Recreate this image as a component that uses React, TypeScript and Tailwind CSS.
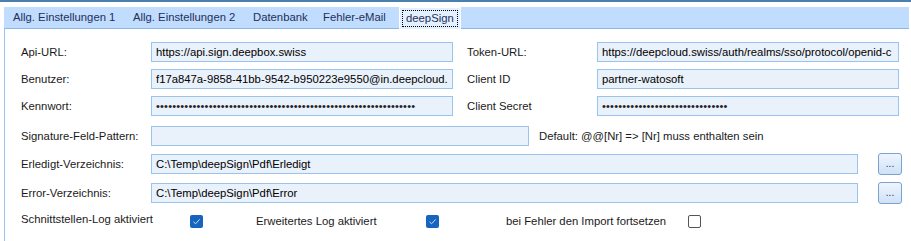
import React from "react";

const inputCls =
  "h-[20px] bg-[#e9f1fb] border border-[#99c4ef] px-[4px] flex items-center text-[11.3px] text-black overflow-hidden whitespace-nowrap";

function Field({ label, value, labelW, inputW, dots }: { label: string; value: string; labelW: number; inputW: number; dots?: boolean }) {
  return (
    <div className="flex items-center">
      <div style={{ width: labelW }} className="text-[11.3px] text-[#1a1a1a]">{label}</div>
      <div style={{ width: inputW }} className={inputCls}>
        <span className={dots ? "text-[11px] tracking-[0.2px] text-[#222]" : ""}>{value}</span>
      </div>
    </div>
  );
}

function Check({ checked }: { checked: boolean }) {
  return checked ? (
    <div className="w-[13px] h-[13px] rounded-[2px] bg-[#1565c0] flex items-center justify-center">
      <svg width="9" height="9" viewBox="0 0 9 9">
        <path d="M1.5 4.8 L3.6 6.8 L7.6 2.4" fill="none" stroke="#cfe0f5" strokeWidth="1" />
      </svg>
    </div>
  ) : (
    <div className="w-[13px] h-[13px] rounded-[2px] border border-[#555] bg-white" />
  );
}

function Btn() {
  return (
    <div className="w-[24px] h-[22px] rounded-[3px] border border-[#7aa3d0] bg-gradient-to-b from-[#eef5fd] to-[#cfe2f8] flex items-center justify-center text-[10px] text-[#303060] leading-none">
      ...
    </div>
  );
}

export default function App() {
  const tabs: [string, number][] = [
    ["Allg. Einstellungen 1", 120],
    ["Allg. Einstellungen 2", 120],
    ["Datenbank", 70],
    ["Fehler-eMail", 76],
  ];
  return (
    <div className="w-[911px] h-[241px] bg-white relative overflow-hidden" style={{ fontFamily: '"Liberation Sans", Arial, sans-serif' }}>
      <div className="h-[2px] bg-[#4a7fae]" />
      <div className="mt-[5px] ml-[4px] mr-[2px] h-[22px] bg-[#c0dcff] border-b border-[#8cb6e8] flex items-end pl-[9px]">
        {tabs.map(([t, w]) => (
          <div key={t} style={{ width: w }} className="h-[21px] flex items-center text-[11.3px] text-[#1f2f5a]">{t}</div>
        ))}
        <div className="relative h-[22px] -mb-[1px] px-[2px] bg-[#e2f0ff] border border-b-0 border-white flex items-center">
          <div className="border border-dotted border-black px-[3px] h-[17px] flex items-center text-[11.3px] text-[#1f2f5a]">deepSign</div>
        </div>
      </div>
      <div className="ml-[4px] border-l border-[#9cc2ee] h-[220px] pl-[16px] pt-[13px] flex flex-col">
        <div className="flex flex-col gap-[7px]">
          <div className="flex">
            <Field label="Api-URL:" value="https://api.sign.deepbox.swiss" labelW={130} inputW={302} />
            <div className="ml-[14px]"><Field label="Token-URL:" value="https://deepcloud.swiss/auth/realms/sso/protocol/openid-c" labelW={130} inputW={302} /></div>
          </div>
          <div className="flex">
            <Field label="Benutzer:" value="f17a847a-9858-41bb-9542-b950223e9550@in.deepcloud." labelW={130} inputW={302} />
            <div className="ml-[14px]"><Field label="Client ID" value="partner-watosoft" labelW={130} inputW={302} /></div>
          </div>
          <div className="flex">
            <Field label="Kennwort:" value={"•".repeat(64)} labelW={130} inputW={302} dots />
            <div className="ml-[14px]"><Field label="Client Secret" value={"•".repeat(31)} labelW={130} inputW={302} dots /></div>
          </div>
        </div>
        <div className="mt-[10px] flex flex-col gap-[7px]">
          <div className="flex items-center">
            <Field label="Signature-Feld-Pattern:" value="" labelW={130} inputW={378} />
            <div className="ml-[10px] text-[11.3px] text-[#1a1a1a]">Default: @@[Nr] =&gt; [Nr] muss enthalten sein</div>
          </div>
          <div className="flex items-center">
            <Field label="Erledigt-Verzeichnis:" value="C:\Temp\deepSign\Pdf\Erledigt" labelW={130} inputW={707} />
            <div className="ml-[20px]"><Btn /></div>
          </div>
          <div className="flex items-center">
            <Field label="Error-Verzeichnis:" value="C:\Temp\deepSign\Pdf\Error" labelW={130} inputW={707} />
            <div className="ml-[20px]"><Btn /></div>
          </div>
        </div>
        <div className="mt-[10px] flex items-center h-[14px]">
          <div className="w-[169px] text-[11.3px] text-[#1a1a1a] -mt-[3px]">Schnittstellen-Log aktiviert</div>
          <Check checked />
          <div className="ml-[53px] w-[170px] text-[11.3px] text-[#1a1a1a]">Erweitertes Log aktiviert</div>
          <Check checked />
          <div className="ml-[67px] w-[182px] text-[11.3px] text-[#1a1a1a]">bei Fehler den Import fortsetzen</div>
          <Check checked={false} />
        </div>
      </div>
    </div>
  );
}
